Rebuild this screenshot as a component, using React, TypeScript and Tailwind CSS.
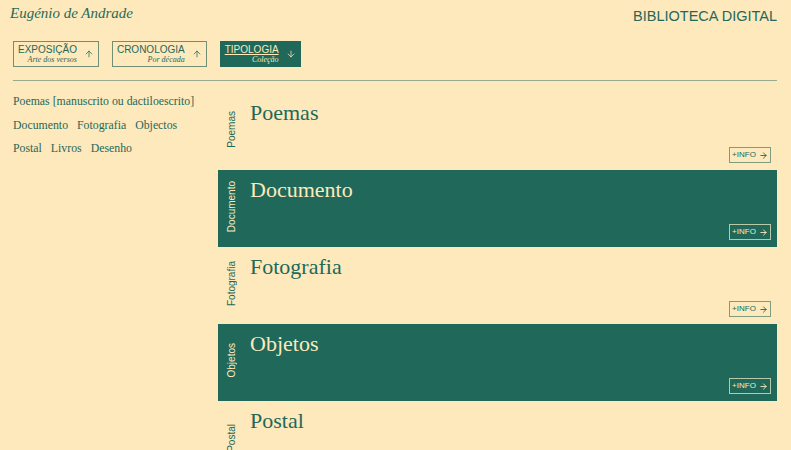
import React from "react";
import { ArrowUp, ArrowDown, ArrowRight } from "lucide-react";

const serif = { fontFamily: '"Liberation Serif", "Times New Roman", serif' };
const sans = { fontFamily: '"Liberation Sans", Arial, sans-serif' };

function NavBtn({ title, sub, active, down }: { title: string; sub: string; active?: boolean; down?: boolean }) {
  return (
    <div
      className={
        "flex h-[26px] items-center gap-[7px] border pl-[4px] pr-[4px] " +
        (active ? "border-[#1f685a] bg-[#1f685a] text-[#fde9bb]" : "border-[#6f8f74] text-[#1f685a]")
      }
    >
      <div className="flex flex-col items-end">
        <span className={"text-[10px] leading-[11px] " + (active ? "underline underline-offset-[1px]" : "")} style={sans}>
          {title}
        </span>
        <span className="text-[8px] italic leading-[9px]" style={serif}>
          {sub}
        </span>
      </div>
      {down ? <ArrowDown size={10} strokeWidth={1.8} /> : <ArrowUp size={10} strokeWidth={1.8} />}
    </div>
  );
}

function Section({ name, filled }: { name: string; filled?: boolean }) {
  const fg = filled ? "text-[#fde9bb]" : "text-[#1f685a]";
  return (
    <div className={"flex h-[77px] " + (filled ? "bg-[#1f685a] " : "") + fg}>
      <div className="flex w-[26px] items-center justify-center pb-[4px]">
        <span className="rotate-180 text-[10px] leading-[11px] [writing-mode:vertical-rl]" style={sans}>
          {name}
        </span>
      </div>
      <div className="flex flex-1 flex-col pl-[6px] pr-[6px] pb-[7px] pt-[6px]">
        <div className="text-[22px] leading-[28px]" style={serif}>
          {name}
        </div>
        <div
          className={
            "mt-auto flex h-[16px] w-[42px] items-center justify-center gap-[3px] self-end border text-[8px] " +
            (filled ? "border-[#b8c9a8]" : "border-[#7e9c80]")
          }
          style={sans}
        >
          <span>+INFO</span>
          <ArrowRight size={9} strokeWidth={2.4} />
        </div>
      </div>
    </div>
  );
}

export default function App() {
  return (
    <div className="h-[450px] w-full overflow-hidden bg-[#fde9bb] pl-[13px] pr-[14px] text-[#1f685a]">
      <header className="flex items-start justify-between pt-[4px]">
        <div className="ml-[-3px] text-[15px] italic leading-[18px] text-[#2a6a57]" style={serif}>
          Eugénio de Andrade
        </div>
        <div className="pt-[3px] text-[14.5px] leading-[18px]" style={sans}>
          BIBLIOTECA DIGITAL
        </div>
      </header>

      <nav className="mt-[16px] flex gap-[13px]">
        <NavBtn title="EXPOSIÇÃO" sub="Arte dos versos" />
        <NavBtn title="CRONOLOGIA" sub="Por década" />
        <NavBtn title="TIPOLOGIA" sub="Coleção" active down />
      </nav>

      <div className="mt-[13px] h-px bg-[#97aa8f]" />

      <div className="flex pt-[12px]">
        <div className="w-[205px] shrink-0 pr-[8px]">
          <div className="flex flex-wrap gap-x-[9px] gap-y-[7.5px] text-[11.8px] leading-[16px]" style={serif}>
            <span>Poemas [manuscrito ou dactiloescrito]</span>
            <span>Documento</span>
            <span>Fotografia</span>
            <span>Objectos</span>
            <span>Postal</span>
            <span>Livros</span>
            <span>Desenho</span>
          </div>
        </div>
        <div className="flex-1">
          <Section name="Poemas" />
          <Section name="Documento" filled />
          <Section name="Fotografia" />
          <Section name="Objetos" filled />
          <Section name="Postal" />
        </div>
      </div>
    </div>
  );
}
